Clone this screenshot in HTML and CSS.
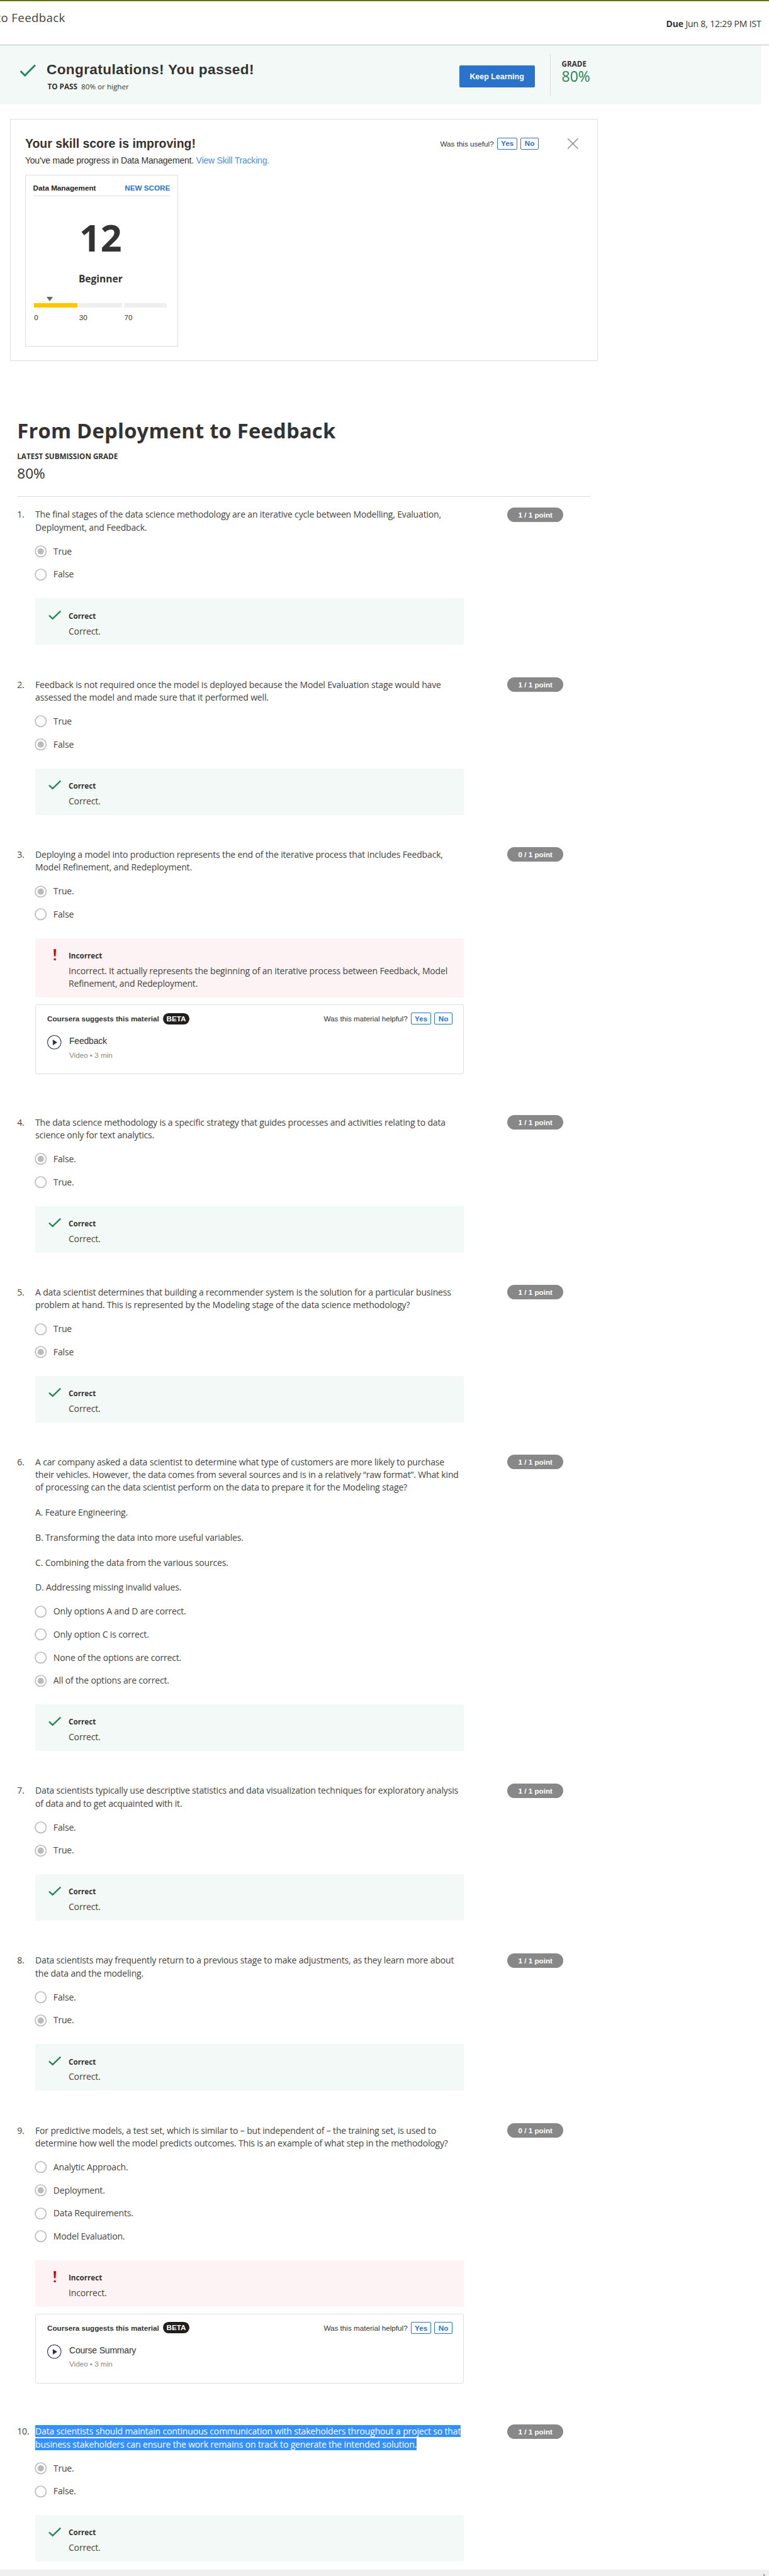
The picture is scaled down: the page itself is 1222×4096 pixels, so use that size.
FILE: index.html
```html
<!DOCTYPE html>
<html lang="en">
<head>
<meta charset="utf-8">
<title>From Deployment to Feedback</title>
<link rel="stylesheet" href="styles.css">
</head>
<body>
<header class="topbar">
  <div class="topbar-title">to Feedback</div>
  <div class="due"><b>Due</b> <span>Jun 8, 12:29 PM IST</span></div>
</header>

<section class="banner">
  <svg class="banner-check" viewBox="0 0 34 26"><path d="M2 14 11 23 32 2" /></svg>
  <div class="banner-text">
    <h1>Congratulations! You passed!</h1>
    <p class="to-pass"><b>TO PASS</b><span>80% or higher</span></p>
  </div>
  <button class="keep">Keep Learning</button>
  <div class="grade"><b>GRADE</b><span>80%</span></div>
</section>

<section class="skill">
  <div class="skill-head">
    <div class="skill-title">
      <h2>Your skill score is improving!</h2>
      <p>You've made progress in Data Management. <a>View Skill Tracking.</a></p>
    </div>
    <div class="vote"><span class="vote-label">Was this useful?</span><button class="yes">Yes</button><button class="no">No</button></div>
    <svg class="close" viewBox="0 0 24 24"><path d="M1.500 1.500 22.500 22.500M22.500 1.500 1.500 22.500"/></svg>
  </div>
  <div class="score">
    <div class="score-head"><span>Data Management</span><span class="score-new">NEW SCORE</span></div>
    <div class="score-value">12</div>
    <div class="score-level">Beginner</div>
    <div class="score-marker"></div>
    <div class="score-bar"><i class="on"></i><i></i><i></i></div>
    <div class="score-ticks"><span>0</span><span>30</span><span>70</span></div>
  </div>
</section>

<main class="quiz">
  <div class="quiz-head">
    <h2>From Deployment to Feedback</h2>
    <div class="latest">LATEST SUBMISSION GRADE</div>
    <div class="latest-grade">80%</div>
  </div>
  <div id="questions"></div>
</main>

<div class="scrollbar"><i></i></div>
<script src="quiz.js"></script>
</body>
</html>
```

FILE: styles.css
```css
/* 1rem is ten design units; the page scales from this one value */
html { font-size: 7.7871px; }
* { box-sizing: border-box; }
body {
  margin: 0;
  width: 156.93rem;
  height: 526rem;
  overflow: hidden;
  display: flex;
  flex-direction: column;
  background: #fff;
  color: #333;
  font: 1.8rem/2.6rem "Open Sans", sans-serif;
  white-space: nowrap;
}
h1, h2, p { margin: 0; }
button { font: bold 1.6rem/1 "Liberation Sans", sans-serif; padding: 0; }
svg { display: block; fill: none; flex: none; }

.topbar {
  height: 9.3rem;
  flex: none;
  border-top: 2px solid #637310;
  border-bottom: 1px solid #bbb;
  display: flex;
  justify-content: space-between;
  padding-right: 1.6rem;
}
.topbar-title { font-size: 2.4rem; line-height: 3.4rem; margin: 1.7rem 0 0 -.7rem; letter-spacing: .045rem; color: #444; }
.due { margin-top: 3.3rem; letter-spacing: -.02rem; }

.banner {
  height: 12rem;
  flex: none;
  width: 155.4rem;
  background: #f3f9f7;
  display: flex;
  align-items: flex-start;
}
.banner-check { width: 3.4rem; height: 2.6rem; margin: 3.8rem 2.1rem 0 4rem; stroke: #1f8354; stroke-width: 3.6; }
.banner-text { width: 84.2rem; padding-top: 3.1rem; }
.banner h1 { font: bold 2.9rem/3.6rem "Liberation Sans", sans-serif; letter-spacing: .05rem; }
.to-pass { margin: .63rem 0 0 .2rem; font-size: 1.5rem; line-height: 2.2rem; display: flex; gap: .8rem; }
.keep { width: 15.4rem; height: 4.5rem; margin-top: 4rem; padding-top: .2rem; background: #2a73cc; color: #fff; border: 0; border-radius: 2px; }
.grade { margin: 1.8rem 0 0 3.1rem; height: 8.5rem; border-left: 1px solid #ddd; padding: 1rem 0 0 2.3rem; display: flex; flex-direction: column; }
.grade b { font-size: 1.5rem; line-height: 2rem; }
.grade span { font-size: 2.95rem; line-height: 3rem; color: #1f8354; }

.skill {
  flex: none;
  width: 120rem;
  height: 49.4rem;
  margin: 3rem 0 0 2rem;
  border: 1px solid #ddd;
  padding: 3.4rem 3rem 0;
}
.skill-head { display: flex; height: 7.9rem; }
.skill-title { width: 84.7rem; font-family: "Liberation Sans", sans-serif; }
.skill-title h2 { font-size: 2.5rem; line-height: 3rem; }
.skill-title p { margin-top: .7rem; letter-spacing: -.026rem; }
.skill-title a { color: #4a90d9; }
.vote { display: flex; align-items: center; height: 2.5rem; font: 1.5rem/2.5rem "Liberation Sans", sans-serif; margin-top: .25rem; }
.vote button { height: 2.5rem; border: 1px solid #2a73cc; border-radius: 2px; background: #fff; color: #2a73cc; font-size: 1.5rem; }
.vote .yes { width: 4.1rem; margin: 0 .7rem; }
.vote .no { width: 3.6rem; }
.close { width: 2.4rem; height: 2.4rem; margin: .3rem 0 0 5.9rem; stroke: #888; stroke-width: 1.8; }

.score { width: 31.2rem; height: 35rem; border: 1px solid #ddd; padding: 0 1.5rem; display: flex; flex-direction: column; }
.score-head { height: 4.2rem; border-bottom: 1px solid #ddd; display: flex; justify-content: space-between; font: bold 1.5rem/2.4rem "Liberation Sans", sans-serif; padding-top: 1.4rem; color: #222; }
.score-new { color: #2a73cc; }
.score-value { font-weight: bold; font-size: 7.6rem; line-height: 10rem; text-align: center; margin: 3.5rem .4rem 0 0; }
.score-level { font-weight: bold; font-size: 2rem; line-height: 2.8rem; text-align: center; margin: 2.1rem .4rem 0 0; }
.score-marker { width: 0; border: .65rem solid transparent; border-top: .9rem solid #666; border-bottom: 0; margin: 2.1rem 0 .4rem 2.7rem; }
.score-bar { display: flex; gap: .35rem; margin-left: .2rem; }
.score-bar i { width: 8.8rem; height: .9rem; background: #eee; }
.score-bar .on { background: #ffc500; }
.score-ticks { display: flex; margin: 1rem 0 0 .2rem; font: 1.5rem/2.2rem "Liberation Sans", sans-serif; }
.score-ticks span { width: 9.2rem; }

.quiz { flex: none; width: 117rem; margin: 11.4rem 0 0 3.5rem; }
.quiz-head { height: 16.3rem; border-bottom: 1px solid #ddd; }
.quiz-head h2 { font-size: 4.2rem; line-height: 5.6rem; letter-spacing: .03rem; }
.latest { font-weight: bold; font-size: 1.5rem; line-height: 2.2rem; margin-top: 1.43rem; }
.latest-grade { font-size: 2.9rem; line-height: 4rem; margin-top: .3rem; }

.question { display: grid; grid-template-columns: 3.7rem 87.5rem 1fr; align-items: start; margin-top: 6.6rem; letter-spacing: -.021rem; color: #444; }
.question:first-child { margin-top: 2.2rem; }
.question.after-material { margin-top: 8.3rem; }
.num, .prompt { padding-top: .23rem; }
.prompt p + p { margin-top: 2.5rem; }
.marked { background: #3390ff; color: #fff; }
.points { justify-self: start; margin-left: 8.8rem; width: 11.5rem; height: 3rem; border-radius: 1.5rem; background: #888; color: #fff; font: bold 1.5rem/3.2rem "Liberation Sans", sans-serif; letter-spacing: 0; text-align: center; }
.options { margin-top: 1.25rem; }
.option { display: flex; align-items: center; height: 4.7rem; gap: 1.3rem; }
.radio { width: 2.5rem; height: 2.5rem; margin-left: -.1rem; stroke: #bbb; stroke-width: 2.2; }
.radio .dot { display: none; }
.radio.on .dot { display: inline; fill: #bbb; stroke: none; }
.result { display: flex; margin-top: 2.52rem; background: #f3f9f7; padding: 2.45rem 3rem 1.5rem 2.7rem; }
.result.bad { background: #fdf3f4; }
.result svg { width: 2.6rem; height: 2.6rem; margin: -.35rem 1.5rem 0 0; stroke: #1f8354; stroke-width: 3; }
.result.bad svg { stroke: none; fill: #d30001; }
.result b { display: block; font-size: 1.5rem; line-height: 2.2rem; margin-bottom: .75rem; letter-spacing: 0; color: #333; }
.material { height: 14.3rem; margin-top: 1.4rem; border: 1px solid #ddd; border-radius: 3px; padding: 1.55rem 2.3rem 0; font-family: "Liberation Sans", sans-serif; letter-spacing: 0; }
.material-head { display: flex; align-items: center; height: 2.5rem; font-size: 1.5rem; color: #333; }
.material-head strong { padding-top: .15rem; }
.material-head .vote { margin: 0 0 0 auto; }
.beta { width: 5.4rem; height: 2.3rem; margin-left: .8rem; border-radius: 1.15rem; background: #1f1f1f; color: #fff; font: bold 1.5rem/2.4rem "Liberation Sans", sans-serif; text-align: center; }
.material-item { display: flex; margin-top: 2rem; gap: 1.6rem; letter-spacing: -.025rem; color: #333; }
.material-item svg { width: 2.9rem; height: 2.9rem; margin-top: .2rem; stroke: #2d3440; }
.material-item small { display: block; margin-top: .3rem; font-size: 1.5rem; letter-spacing: 0; color: #888; line-height: 2.6rem; }

.scrollbar { margin-top: auto; flex: none; height: 1.3rem; background: #f0f0f0; display: flex; justify-content: flex-end; align-items: flex-end; padding-right: .8rem; overflow: hidden; }
.scrollbar i { border: .5rem solid transparent; border-left: .5rem solid #999; border-right: 0; margin-bottom: -.25rem; }
```

FILE: quiz.js
```js
const questions = [
  { text: ["The final stages of the data science methodology are an iterative cycle between Modelling, Evaluation,<br>Deployment, and Feedback."], options: ["True", "False"], picked: 0 },
  { text: ["Feedback is not required once the model is deployed because the Model Evaluation stage would have<br>assessed the model and made sure that it performed well."], options: ["True", "False"], picked: 1 },
  { text: ["Deploying a model into production represents the end of the iterative process that includes Feedback,<br>Model Refinement, and Redeployment."], options: ["True.", "False"], picked: 0,
    wrong: "Incorrect. It actually represents the beginning of an iterative process between Feedback, Model<br>Refinement, and Redeployment.", material: "Feedback" },
  { text: ["The data science methodology is a specific strategy that guides processes and activities relating to data<br>science only for text analytics."], options: ["False.", "True."], picked: 0 },
  { text: ["A data scientist determines that building a recommender system is the solution for a particular business<br>problem at hand. This is represented by the Modeling stage of the data science methodology?"], options: ["True", "False"], picked: 1 },
  { text: ["A car company asked a data scientist to determine what type of customers are more likely to purchase<br>their vehicles. However, the data comes from several sources and is in a relatively “raw format”. What kind<br>of processing can the data scientist perform on the data to prepare it for the Modeling stage?",
    "A. Feature Engineering.", "B. Transforming the data into more useful variables.", "C. Combining the data from the various sources.", "D. Addressing missing invalid values."],
    options: ["Only options A and D are correct.", "Only option C is correct.", "None of the options are correct.", "All of the options are correct."], picked: 3 },
  { text: ["Data scientists typically use descriptive statistics and data visualization techniques for exploratory analysis<br>of data and to get acquainted with it."], options: ["False.", "True."], picked: 1 },
  { text: ["Data scientists may frequently return to a previous stage to make adjustments, as they learn more about<br>the data and the modeling."], options: ["False.", "True."], picked: 1 },
  { text: ["For predictive models, a test set, which is similar to – but independent of – the training set, is used to<br>determine how well the model predicts outcomes. This is an example of what step in the methodology?"], options: ["Analytic Approach.", "Deployment.", "Data Requirements.", "Model Evaluation."], picked: 1,
    wrong: "Incorrect.", material: "Course Summary" },
  { text: ["<span class=\"marked\">Data scientists should maintain continuous communication with stakeholders throughout a project so that <br>business stakeholders can ensure the work remains on track to generate the intended solution.</span>"], options: ["True.", "False."], picked: 0 }
];

const check = '<svg viewBox="0 0 26 26"><path d="M1.200 13.500 8.500 20.500 24.800 4.500"/></svg>';
const bang = '<svg viewBox="0 0 26 26"><path d="M10.500 1.500h5l-.9 14.500h-3.200z"/><circle cx="13" cy="22.500" r="2.300"/></svg>';
const play = '<svg viewBox="0 0 29 29"><circle cx="14.500" cy="14.500" r="13.800" stroke-width="1.300"/><path d="M11.500 9v11.500l9-5.700z" fill="#2d3440" stroke="none"/></svg>';
const radio = on => `<svg class="radio${on ? " on" : ""}" viewBox="0 0 25 25"><circle cx="12.500" cy="12.500" r="11.200"/><circle class="dot" cx="12.500" cy="12.500" r="6.500"/></svg>`;

const render = (q, i) => `
<section class="question${i && questions[i - 1].material ? " after-material" : ""}">
  <div class="num">${i + 1}.</div>
  <div class="body">
    <div class="prompt">${q.text.map(t => `<p>${t}</p>`).join("")}</div>
    <div class="options">${q.options.map((o, n) => `<div class="option">${radio(n === q.picked)}<span>${o}</span></div>`).join("")}</div>
    <div class="result${q.wrong ? " bad" : ""}">${q.wrong ? bang : check}<div><b>${q.wrong ? "Incorrect" : "Correct"}</b><span>${q.wrong || "Correct."}</span></div></div>
    ${q.material ? `<div class="material">
      <div class="material-head"><strong>Coursera suggests this material</strong><span class="beta">BETA</span>
        <div class="vote"><span class="vote-label">Was this material helpful?</span><button class="yes">Yes</button><button class="no">No</button></div></div>
      <div class="material-item">${play}<div><span>${q.material}</span><small>Video • 3 min</small></div></div>
    </div>` : ""}
  </div>
  <div class="points">${q.wrong ? 0 : 1} / 1 point</div>
</section>`;

document.getElementById("questions").innerHTML = questions.map(render).join("");
```
